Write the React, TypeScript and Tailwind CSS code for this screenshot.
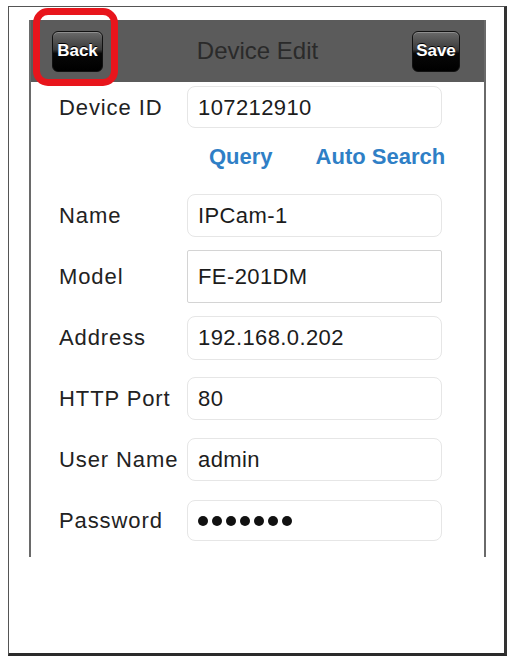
import React from "react";

const font = { fontFamily: '"Liberation Sans", Arial, Helvetica, sans-serif' };

function GlossButton({ label, w }: { label: string; w: string }) {
  return (
    <div
      className={`${w} h-[41px] rounded-[6px] border border-[#111] flex items-center justify-center text-white font-bold text-[17px] bg-[linear-gradient(180deg,#6a6a6a_0%,#3a3a3a_45%,#080808_55%,#000_100%)] shadow-[inset_0_1px_0_rgba(255,255,255,0.25)]`}
    >
      <span className="[text-shadow:0_-1px_0_#000]">{label}</span>
    </div>
  );
}

type Field = { label: string; value: string; h: string; model?: boolean; pw?: boolean };

const fields: Field[] = [
  { label: "Name", value: "IPCam-1", h: "h-[43px]" },
  { label: "Model", value: "FE-201DM", h: "h-[53px]", model: true },
  { label: "Address", value: "192.168.0.202", h: "h-[44px]" },
  { label: "HTTP Port", value: "80", h: "h-[43px]" },
  { label: "User Name", value: "admin", h: "h-[43px]" },
  { label: "Password", value: "", h: "h-[41px]", pw: true },
];

function Label({ children }: { children: React.ReactNode }) {
  return (
    <div className="w-[156px] shrink-0 pl-[28px] text-[22px] tracking-[0.9px] text-[#222] whitespace-nowrap">
      {children}
    </div>
  );
}

function Dots() {
  return (
    <div className="flex items-center gap-[4px]">
      {[0, 1, 2, 3, 4, 5, 6].map((i) => (
        <span key={i} className="w-[10px] h-[10px] rounded-full bg-[#111]" />
      ))}
    </div>
  );
}

function Row({ f }: { f: Field }) {
  return (
    <div className="h-[61px] flex items-center">
      <Label>{f.label}</Label>
      <div
        className={`w-[255px] shrink-0 ${f.h} flex items-center pl-[10px] bg-white ${
          f.model
            ? "border-[1.5px] border-[#d4d4d4] rounded-[2px] font-medium"
            : "border border-[#e6e6e6] rounded-[8px]"
        } text-[22px] tracking-[0.4px] text-[#1c1c1c]`}
      >
        {f.pw ? <Dots /> : f.value}
      </div>
    </div>
  );
}

export default function App() {
  return (
    <div className="w-[509px] h-[659px] bg-white pt-[6px] pl-[8px]" style={font}>
      <div className="relative w-[499px] h-[650px] border-l-[1.5px] border-t-[1.5px] border-r-[3px] border-b-[3px] border-l-[#555] border-t-[#555] border-r-[#333] border-b-[#2a2a2a] pl-[20px] pt-[13px]">
        <div className="w-[457px] h-[537px] border-l-2 border-r-2 border-[#6a6a6a] flex flex-col">
          {/* navigation bar */}
          <div className="h-[62px] bg-[#5b5b5b] flex items-center justify-between pl-[21px] pr-[24px]">
            <GlossButton label="Back" w="w-[51px]" />
            <div className="text-[24px] text-[#2a2a2a]">Device Edit</div>
            <GlossButton label="Save" w="w-[48px]" />
          </div>

          {/* device id */}
          <div className="flex items-center mt-[4px]">
            <Label>Device ID</Label>
            <div className="w-[255px] shrink-0 h-[42px] flex items-center pl-[10px] border border-[#e6e6e6] rounded-[8px] text-[22px] tracking-[0.4px] text-[#1c1c1c]">
              107212910
            </div>
          </div>

          {/* lookup actions */}
          <div className="h-[57px] flex items-center pl-[178px] gap-[43px] text-[22px] font-bold text-[#2f7fc6]">
            <span>Query</span>
            <span>Auto Search</span>
          </div>

          {fields.map((f) => (
            <Row key={f.label} f={f} />
          ))}
        </div>

        {/* highlight around the back button */}
        <div className="absolute left-[24px] top-[1px] w-[85px] h-[78px] border-[7px] border-[#e8151c] rounded-[15px]" />
      </div>
    </div>
  );
}
